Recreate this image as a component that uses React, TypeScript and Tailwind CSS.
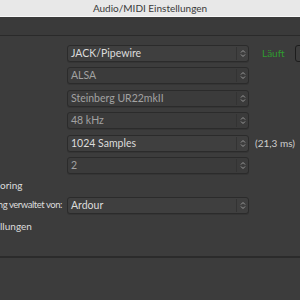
import React from 'react';

const font = { fontFamily: "Lato, 'Noto Sans', sans-serif" };

// little up/down chevrons at the right end of each combo box
const Updown = () => (
  <svg width="6" height="9" viewBox="0 0 6 9" className="text-[#9a9a9a]">
    <path d="M1 3.5 L3 1.5 L5 3.5" fill="none" stroke="currentColor" strokeWidth="1" />
    <path d="M1 5.5 L3 7.5 L5 5.5" fill="none" stroke="currentColor" strokeWidth="1" />
  </svg>
);

const Combo = ({ value, enabled = false }: { value: string; enabled?: boolean }) => (
  <div
    className={
      'flex h-[17px] w-[182px] shrink-0 items-center rounded-[3px] border border-[#2b2b2b] shadow-[0_1px_0_#353535] ' +
      (enabled ? 'bg-[#3f3f3f]' : 'bg-[#3b3b3b]')
    }
  >
    <span
      className={
        'flex-1 truncate pl-[3px] text-[10.5px] leading-[15px] ' + (enabled ? 'text-[#dcdcdc]' : 'text-[#a2a2a2]')
      }
    >
      {value}
    </span>
    <div className="h-[13px] w-px bg-[#333333]" />
    <div className="flex w-[11px] items-center justify-center">
      <Updown />
    </div>
  </div>
);

export default function App() {
  return (
    <div className="flex h-[300px] w-[300px] flex-col overflow-hidden bg-[#3c3c3c]" style={font}>
      {/* window title */}
      <div className="flex h-[16px] shrink-0 items-center justify-center bg-[#e8e8e8] text-[10px] text-[#3a3a3a]">
        Audio/MIDI Einstellungen
      </div>
      <div className="h-px shrink-0 bg-[#f6f6f6]" />
      <div className="h-[18px] shrink-0 bg-[#3a3a3a]" />
      <div className="h-px shrink-0 bg-[#2a2a2a]" />

      <div className="flex flex-col pt-[9px] text-[10px]">
        <div className="flex items-center whitespace-nowrap pl-[67px]">
          <Combo value="JACK/Pipewire" enabled />
          <span className="ml-[13px] w-[20px] shrink-0 text-[#2f9a2f]">Läuft</span>
          <div className="ml-[13px] h-[17px] w-[30px] shrink-0 rounded-[3px] border border-[#1c1c1c] bg-[#3d3d3d]" />
        </div>
        <div className="mt-[5.4px] flex items-center pl-[67px]">
          <Combo value="ALSA" />
        </div>
        <div className="mt-[5.4px] flex items-center pl-[67px]">
          <Combo value="Steinberg UR22mkII" />
        </div>
        <div className="mt-[5.4px] flex items-center pl-[67px]">
          <Combo value="48 kHz" />
        </div>
        <div className="mt-[5.4px] flex items-center whitespace-nowrap pl-[67px]">
          <Combo value="1024 Samples" enabled />
          <span className="ml-[6px] text-[#cfcfcf]">(21,3 ms)</span>
        </div>
        <div className="mt-[5.4px] flex items-center pl-[67px]">
          <Combo value="2" />
        </div>

        <div className="mt-[4px] flex h-[16px] items-center whitespace-nowrap text-[#dcdcdc]">oring</div>

        <div className="mt-[3px] flex items-center">
          <div className="flex w-[67px] shrink-0 justify-end whitespace-nowrap pr-[5px] text-[9.5px] tracking-[-0.45px] text-[#dcdcdc]">
            ng verwaltet von:
          </div>
          <Combo value="Ardour" enabled />
        </div>

        <div className="mt-[4px] flex h-[17px] items-center whitespace-nowrap text-[#dcdcdc]">llungen</div>
      </div>

      <div className="mt-[21px] h-[2px] shrink-0 bg-[#2b2b2b]" />
    </div>
  );
}
